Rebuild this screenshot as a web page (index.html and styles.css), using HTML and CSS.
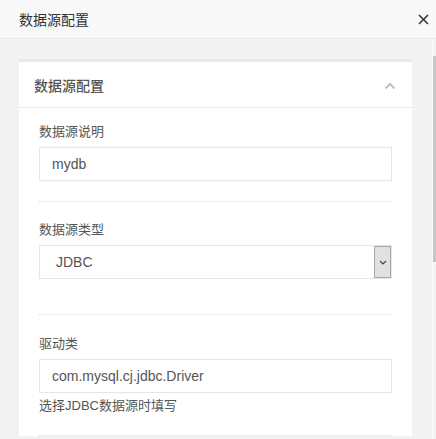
FILE: index.html
```html
<!DOCTYPE html>
<html lang="zh">
<head>
<meta charset="utf-8">
<title>数据源配置</title>
<link rel="stylesheet" href="styles.css">
</head>
<body>
<div class="dialog">
  <header class="dialog-header">
    <span class="dialog-title">数据源配置</span>
    <svg class="close-icon" width="11" height="11" viewBox="0 0 11 11"><path d="M1 1L10 10M10 1L1 10" stroke="#333" stroke-width="1.5" fill="none"/></svg>
  </header>
  <div class="dialog-main">
    <div class="dialog-content">
      <section class="card">
        <div class="card-header">
          <span class="card-title">数据源配置</span>
          <svg class="collapse-icon" width="12" height="8" viewBox="0 0 12 8"><path d="M1.5 6.5L6 2L10.5 6.5" stroke="#c2c2c2" stroke-width="2.2" fill="none"/></svg>
        </div>
        <div class="card-body">
          <div class="field field-first">
            <div class="field-label">数据源说明</div>
            <div class="text-input">mydb</div>
          </div>
          <div class="field field-select">
            <div class="field-label">数据源类型</div>
            <div class="select-input">
              <span class="select-value">JDBC</span>
              <span class="select-button">
                <svg width="8" height="5" viewBox="0 0 8 5"><path d="M1 1L4 4L7 1" stroke="#444" stroke-width="1.2" fill="none"/></svg>
              </span>
            </div>
          </div>
          <div class="field field-driver">
            <div class="field-label">驱动类</div>
            <div class="text-input">com.mysql.cj.jdbc.Driver</div>
            <div class="field-help">选择JDBC数据源时填写</div>
          </div>
        </div>
      </section>
    </div>
    <div class="scrollbar"><div class="scroll-thumb"></div></div>
  </div>
</div>
</body>
</html>
```
FILE: styles.css
```css
html, body {
  margin: 0;
  padding: 0;
}
body {
  width: 436px;
  height: 439px;
  overflow: hidden;
  font-family: "Liberation Sans", "Noto Sans CJK SC", sans-serif;
  background: #f2f2f2;
}
.dialog {
  display: flex;
  flex-direction: column;
  height: 439px;
}
.dialog-header {
  height: 39px;
  box-sizing: border-box;
  border-bottom: 1px solid #e8e8e8;
  background: #f8f8f8;
  display: flex;
  align-items: center;
  justify-content: space-between;
  padding: 0 7px 0 19px;
}
.dialog-title {
  font-size: 14px;
  color: #333;
}
.close-icon {
  display: block;
}
.dialog-main {
  flex: 1;
  display: flex;
  min-height: 0;
}
.dialog-content {
  flex: 1;
  padding: 20px 20px 0 19px;
  overflow: hidden;
}
.scrollbar {
  width: 4px;
  box-sizing: border-box;
  border-left: 1px solid #fbfbfb;
  background: #f4f4f4;
  padding-top: 17px;
}
.scroll-thumb {
  height: 206px;
  background: #c6c6c6;
}
.card {
  background: #fff;
  border-top: 3px solid #e5e8ec;
}
.card-header {
  height: 46px;
  box-sizing: border-box;
  border-bottom: 1px solid #eaeaea;
  display: flex;
  align-items: center;
  justify-content: space-between;
  padding: 0 16px 0 15px;
}
.card-title {
  font-size: 14px;
  color: #555;
  font-weight: 500;
}
.collapse-icon {
  display: block;
  margin-top: 2px;
}
.card-body {
  padding: 0 20px;
}
.field {
  padding: 18px 0 20px;
  border-bottom: 1px dotted #dcdcdc;
}
.field-first {
  padding-top: 14px;
}
.field-select {
  padding-bottom: 35px;
}
.field-driver {
  padding-top: 19px;
}
.field-label {
  font-size: 13px;
  line-height: 20px;
  color: #555;
  margin-bottom: 5px;
}
.text-input {
  height: 34px;
  box-sizing: border-box;
  border: 1px solid #e6e6e6;
  padding: 0 12px;
  font-size: 14px;
  line-height: 32px;
  color: #555;
}
.select-input {
  height: 34px;
  box-sizing: border-box;
  border: 1px solid #e6e6e6;
  display: flex;
  align-items: stretch;
}
.select-value {
  flex: 1;
  padding-left: 16px;
  font-size: 14px;
  line-height: 32px;
  color: #555;
}
.select-button {
  width: 17px;
  box-sizing: border-box;
  border: 1px solid #a8a8a8;
  background: #e1e1e1;
  display: flex;
  align-items: center;
  justify-content: center;
}
.field-help {
  font-size: 13px;
  line-height: 19px;
  color: #555;
  margin-top: 3px;
}
```
